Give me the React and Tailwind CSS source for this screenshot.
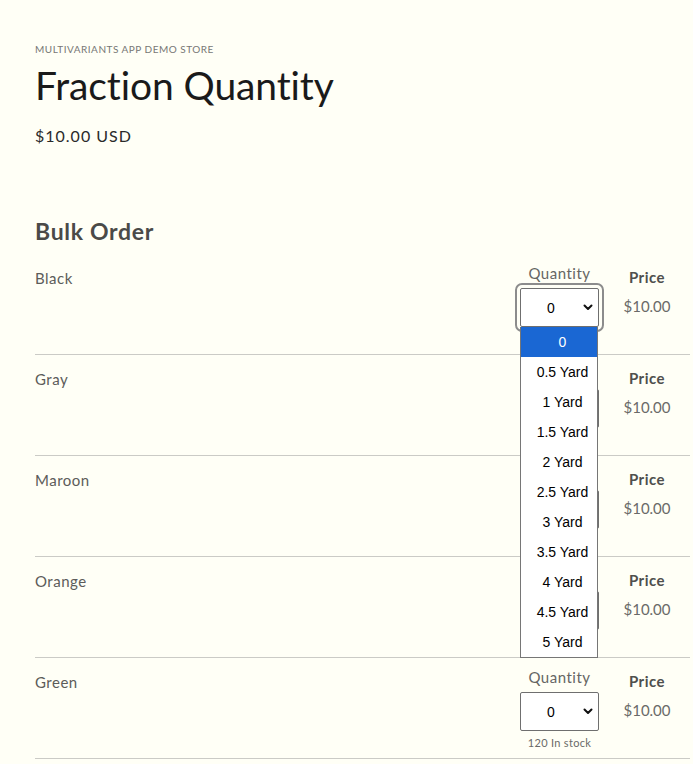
import React from 'react'

const variants = ['Black', 'Gray', 'Maroon', 'Orange', 'Green']
const options = ['0', '0.5 Yard', '1 Yard', '1.5 Yard', '2 Yard', '2.5 Yard', '3 Yard', '3.5 Yard', '4 Yard', '4.5 Yard', '5 Yard']

function Chevron() {
  return (
    <svg width="10" height="7" viewBox="0 0 10 7" className="absolute right-[5px] top-[15px]">
      <path d="M1.5 1.5 L5 5 L8.5 1.5" fill="none" stroke="#111" strokeWidth="2" strokeLinecap="round" strokeLinejoin="round" />
    </svg>
  )
}

function QtySelect({ open }) {
  return (
    <div className="relative w-[79px]">
      <div
        className={
          'relative h-[39px] w-[79px] rounded-[2px] border border-[#6f6f6f] bg-white ' +
          (open ? 'outline-2 outline-solid outline-[#8c8c8c] outline-offset-[3px]' : '')
        }
      >
        <span className="absolute left-[26px] top-[9px] text-[14px] leading-[20px] text-black font-['Liberation_Sans',Arial,sans-serif]">0</span>
        <Chevron />
      </div>
      {open && (
        <div className="absolute left-0 top-[39px] z-10 w-[78px] border border-t-0 border-[#767676] bg-white font-['Liberation_Sans',Arial,sans-serif]">
          {options.map((o, i) => (
            <div
              key={o}
              className={
                'h-[30px] pl-[7px] text-center text-[14px] leading-[30px] ' +
                (i === 0 ? 'bg-[#1a67d3] text-white' : 'text-black')
              }
            >
              {o}
            </div>
          ))}
        </div>
      )}
    </div>
  )
}

function Row({ name, open }) {
  return (
    <div className="flex h-[101px] justify-between border-b border-[#cbcbc6]">
      <div className="pt-[12px] text-[15px] leading-[24px] tracking-[0.5px] text-[#5c5c5a]">{name}</div>
      <div className="flex pr-[21px]">
        <div className="flex w-[79px] flex-col items-center pt-[9px]">
          <div className="h-[20px] text-[15px] leading-[20px] tracking-[0.5px] text-[#666664]">Quantity</div>
          <div className="mt-[5px]">
            <QtySelect open={open} />
          </div>
          <div className="mt-[4px] text-[11px] leading-[16px] tracking-[0.3px] text-[#6a6a68]">120 In stock</div>
        </div>
        <div className="ml-[26px] flex w-[44px] flex-col items-center pt-[13px]">
          <div className="text-[15px] font-bold leading-[20px] tracking-[0.5px] text-[#4f4f4d]">Price</div>
          <div className="mt-[9px] text-[15px] leading-[20px] text-[#6a6a68]">$10.00</div>
        </div>
      </div>
    </div>
  )
}

export default function App() {
  return (
    <div className="min-h-[764px] bg-[#fffff6] pl-[35px] pr-[3px] pt-[43px] font-['Lato','Noto_Sans',sans-serif]">
      <p className="text-[10px] leading-[12px] tracking-[0.5px] text-[#777775]">MULTIVARIANTS APP DEMO STORE</p>
      <h1 className="mt-[6px] text-[39px] leading-[48px] tracking-[-0.1px] text-[#1a1a1a]">Fraction Quantity</h1>
      <p className="mt-[15px] text-[16px] leading-[24px] tracking-[1px] text-[#2a2a2a]">$10.00 USD</p>
      <h2 className="mt-[69px] text-[23px] font-bold leading-[28px] tracking-[0.7px] text-[#4a4a48]">Bulk Order</h2>
      <div className="mt-[9px]">
        {variants.map((v, i) => (
          <Row key={v} name={v} open={i === 0} />
        ))}
      </div>
    </div>
  )
}
